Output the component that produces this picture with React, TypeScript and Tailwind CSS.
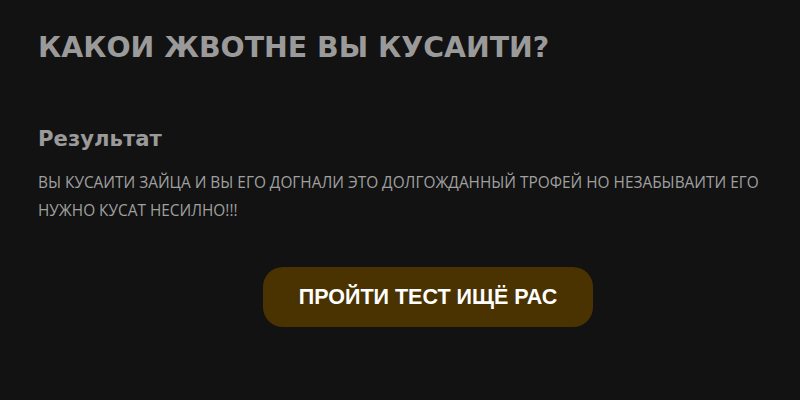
export default function App() {
  return (
    <div className="h-[400px] w-[800px] overflow-hidden bg-[#121212] px-[38px] pt-[30px]">
      <h1 className="font-['DejaVu_Sans',sans-serif] text-[28.4px] font-bold leading-[36px] text-[#9a9a9a]">
        КАКОИ ЖВОТНЕ ВЫ КУСАИТИ?
      </h1>
      <h2 className="mt-[58px] font-['DejaVu_Sans',sans-serif] text-[21.2px] font-bold leading-[30px] text-[#9a9a9a]">
        Результат
      </h2>
      <p className="mt-[15px] font-['Open_Sans',sans-serif] text-[15.4px] leading-[28px] text-[#a0a0a0]">
        ВЫ КУСАИТИ ЗАЙЦА И ВЫ ЕГО ДОГНАЛИ ЭТО ДОЛГОЖДАННЫЙ ТРОФЕЙ НО НЕЗАБЫВАИТИ ЕГО НУЖНО КУСАТ НЕСИЛНО!!!
      </p>
      <div className="mt-[42px] flex">
        <button
          type="button"
          className="ml-[225px] h-[60px] w-[330px] rounded-[20px] bg-[#4a3300] font-['Liberation_Sans',sans-serif] text-[21.5px] font-bold text-white"
        >
          ПРОЙТИ ТЕСТ ИЩЁ РАС
        </button>
      </div>
    </div>
  );
}
